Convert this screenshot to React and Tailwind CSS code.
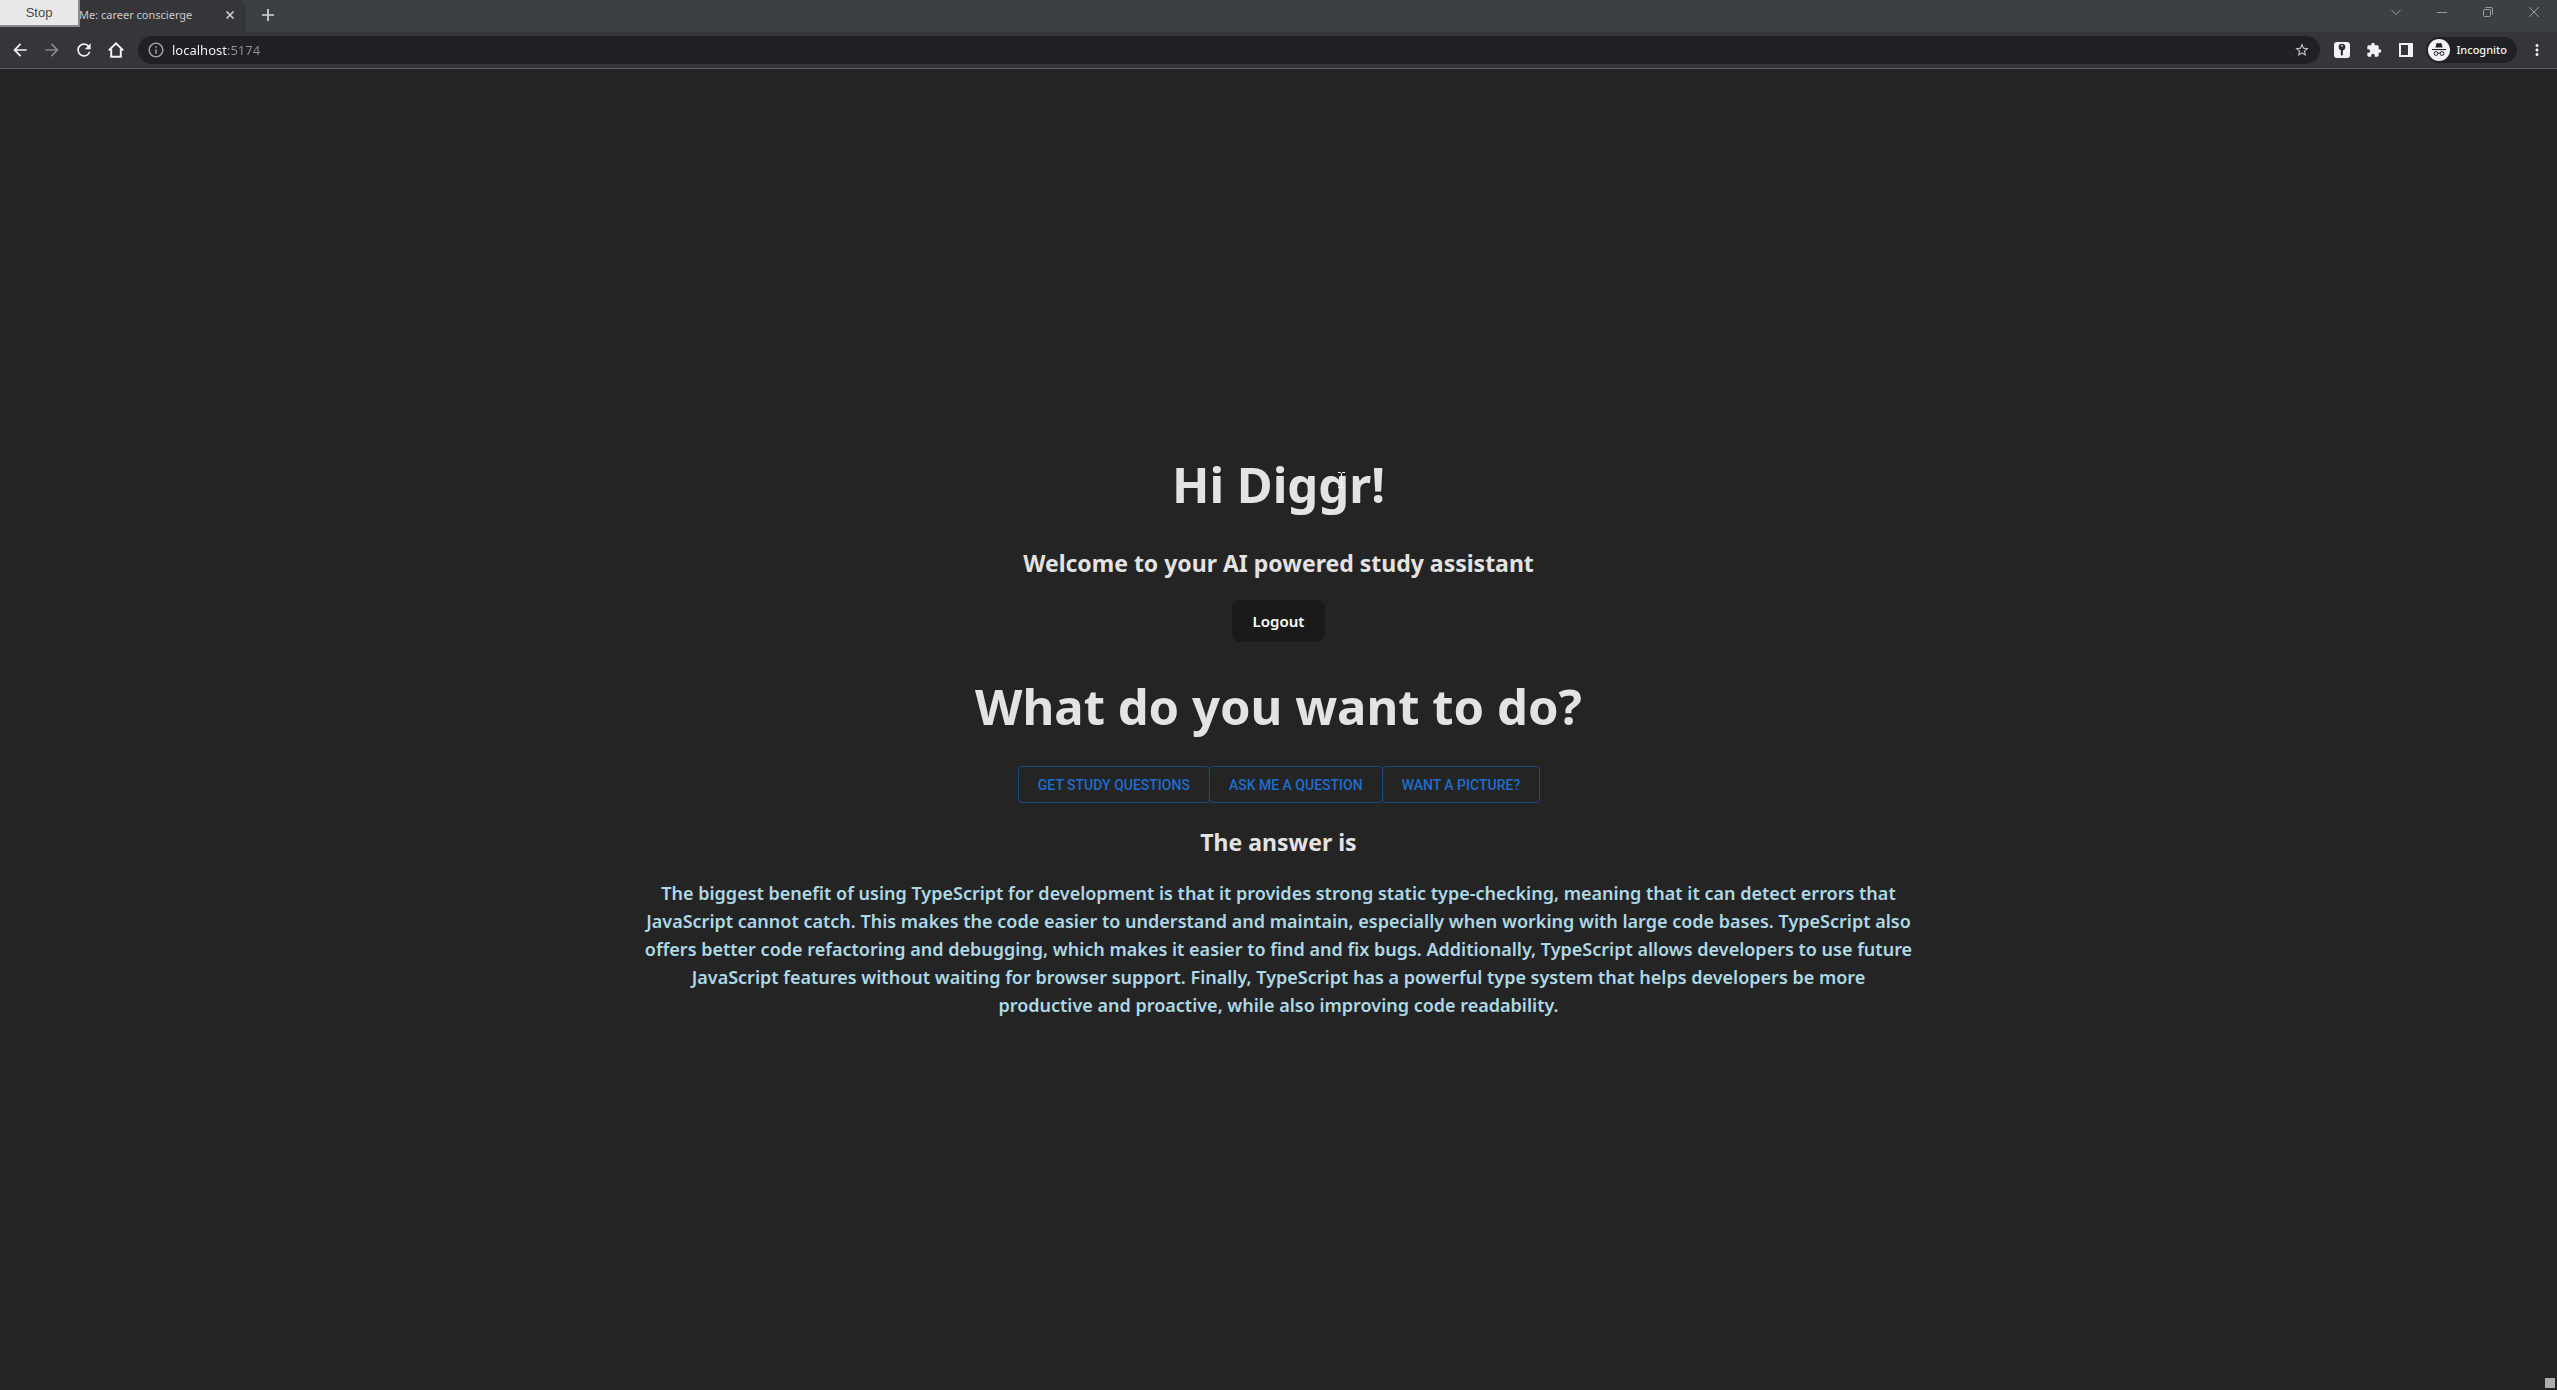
import React from "react";
import {
  MdArrowBack,
  MdArrowForward,
  MdRefresh,
  MdInfoOutline,
  MdStarBorder,
  MdExtension,
  MdMoreVert,
} from "react-icons/md";

function HomeIcon() {
  return (
    <svg viewBox="0 0 16 16" className="size-4" fill="none" stroke="currentColor" strokeWidth="2">
      <path d="M0.8 8.4 8 1.4l7.2 7" />
      <path d="M3.2 7v7.8h9.6V7" />
    </svg>
  );
}

function KeyIcon() {
  return (
    <svg viewBox="0 0 16 16" className="size-4">
      <rect width="16" height="16" rx="3" fill="#f1f3f4" />
      <circle cx="8" cy="5" r="3.3" fill="#2b2c2f" />
      <circle cx="8" cy="3.8" r="0.9" fill="#f1f3f4" />
      <path d="M6.8 7.5h2.4v1.4l-0.7 0.7 0.7 0.8-0.7 0.8 0.7 0.8L8 14l-1.2-1.2z" fill="#2b2c2f" />
    </svg>
  );
}

function PanelIcon() {
  return (
    <svg viewBox="0 0 14 14" className="size-3.5" fill="#f1f3f4">
      <path fillRule="evenodd" d="M0 0h14v14H0zM2 2v10h7V2z" />
    </svg>
  );
}

function IncognitoIcon() {
  return (
    <svg viewBox="0 0 22 22" className="size-[22px]">
      <circle cx="11" cy="11" r="11" fill="#f1f3f4" />
      <path d="M7.4 8.6 8.5 4.5c0.2-0.6 0.7-0.7 1.2-0.5 0.8 0.4 1.8 0.4 2.6 0 0.5-0.2 1 0 1.2 0.5L14.6 8.6z" fill="#202124" />
      <path d="M4 10h14v1.1H4z" fill="#202124" />
      <g fill="none" stroke="#202124" strokeWidth="1">
        <circle cx="8" cy="14.5" r="1.9" />
        <circle cx="14" cy="14.5" r="1.9" />
        <path d="M9.9 14.4q1.1-0.8 2.2 0" />
      </g>
    </svg>
  );
}

function WindowButton({ label, children }) {
  return (
    <button aria-label={label} className="flex h-6 w-[46px] items-center justify-center text-[#9b9ea1]">
      <svg viewBox="0 0 10 10" className="size-2.5 overflow-visible" fill="none" stroke="currentColor" strokeWidth="1">
        {children}
      </svg>
    </button>
  );
}

function IconButton({ label, dim, children }) {
  return (
    <button
      aria-label={label}
      className={dim ? "flex size-8 shrink-0 items-center justify-center text-[#85878a]" : "flex size-8 shrink-0 items-center justify-center"}
    >
      {children}
    </button>
  );
}

function TabStrip() {
  return (
    <div className="flex h-8 items-start bg-[#3c4043]">
      <div className="flex h-8 w-[246px] items-center justify-between rounded-tr-lg bg-[#35363a] pr-2 pb-0.5 pl-[79px]">
        <span className="text-[11px] whitespace-nowrap text-[#c9cbce]">Me: career conscierge</span>
        <button aria-label="Close tab" className="flex size-4 items-center justify-center text-[#d5d7da]">
          <svg viewBox="0 0 8 8" className="size-2" stroke="currentColor" strokeWidth="1.5">
            <path d="M0.5 0.5l7 7M7.5 0.5l-7 7" />
          </svg>
        </button>
      </div>
      <button aria-label="New tab" className="ml-2 flex h-[30px] w-7 items-center justify-center text-[#d5d7da]">
        <svg viewBox="0 0 12 12" className="size-3" stroke="currentColor" strokeWidth="1.7">
          <path d="M6 0v12M0 6h12" />
        </svg>
      </button>
      <div className="ml-auto flex">
        <WindowButton label="Search tabs">
          <path d="M0.5 3 5 7.5 9.5 3" />
        </WindowButton>
        <WindowButton label="Minimize">
          <path d="M0 5.5h10" />
        </WindowButton>
        <WindowButton label="Restore">
          <rect x="0.5" y="2.5" width="7" height="7" rx="1" />
          <path d="M2.5 0.5h5.5a1.5 1.5 0 0 1 1.5 1.5v5.5" />
        </WindowButton>
        <WindowButton label="Close">
          <path d="M0.2 0.2l9.6 9.6M9.8 0.2 0.2 9.8" />
        </WindowButton>
      </div>
    </div>
  );
}

function Toolbar() {
  return (
    <div className="flex h-[37px] items-center border-b border-[#5d5e61] bg-[#35363a] pr-2 pl-1 text-[#f1f3f4]">
      <IconButton label="Back">
        <MdArrowBack className="size-5" />
      </IconButton>
      <IconButton label="Forward" dim>
        <MdArrowForward className="size-5" />
      </IconButton>
      <IconButton label="Reload">
        <MdRefresh className="size-5" />
      </IconButton>
      <IconButton label="Home">
        <HomeIcon />
      </IconButton>
      <div className="ml-1.5 flex h-7 flex-1 items-center rounded-full bg-[#202124] pr-2.5 pl-2">
        <button aria-label="Site information" className="flex size-5 items-center justify-center text-[#9aa0a6]">
          <MdInfoOutline className="size-[18px]" />
        </button>
        <input
          aria-label="Address"
          defaultValue="localhost:5174"
          className="ml-1.5 h-7 flex-1 bg-linear-to-r from-white from-[55px] to-[#8d9196] to-[55px] bg-clip-text text-[13px] text-transparent outline-none"
        />
        <button aria-label="Bookmark this tab" className="flex size-4 items-center justify-center text-[#c6c9cc]">
          <MdStarBorder className="size-4" />
        </button>
      </div>
      <div className="ml-1.5 flex">
        <IconButton label="Password manager">
          <KeyIcon />
        </IconButton>
        <IconButton label="Extensions">
          <MdExtension className="size-4" />
        </IconButton>
        <IconButton label="Side panel">
          <PanelIcon />
        </IconButton>
      </div>
      <button className="ml-1 flex h-[26px] items-center gap-1.5 rounded-full bg-[#202124] pr-2.5 pl-0.5 text-[11px] font-medium text-[#f1f3f4]">
        <IncognitoIcon />
        Incognito
      </button>
      <button aria-label="Menu" className="ml-2 flex h-8 w-6 items-center justify-center">
        <MdMoreVert className="size-[18px]" />
      </button>
    </div>
  );
}

const actions = ["Get study questions", "Ask me a question", "Want a picture?"];

export default function App() {
  return (
    <div className="relative flex min-h-screen flex-col bg-[#242424] font-['Noto_Sans',sans-serif] text-[#e3e3e3]">
      <header>
        <TabStrip />
        <Toolbar />
      </header>
      <button className="absolute top-0 left-0 h-[27px] w-20 border-r-2 border-b-2 border-[#8a8a8a] bg-[#e8e8e8] font-['Liberation_Sans',sans-serif] text-[13px] text-[#4a4a4a]">
        Stop
      </button>
      <main className="mx-auto flex w-full max-w-[1270px] flex-1 flex-col items-center justify-center text-center">
        <h1 className="relative mt-9 mb-8 text-[49px] leading-14 font-bold">
          Hi Diggr!
          <svg viewBox="0 0 7 16" className="absolute top-4 right-10 h-4 w-[7px]" fill="none" stroke="#ffffff">
            <path d="M0 0.5h2.5l1 1 1-1H7M3.5 1.5v13M0 15.5h2.5l1-1 1 1H7" />
          </svg>
        </h1>
        <h2 className="text-[23px] leading-[38px] font-bold">Welcome to your AI powered study assistant</h2>
        <button className="mt-[18px] h-[42px] rounded-lg border border-transparent bg-[#1a1a1a] px-5 text-[15px] font-semibold text-white">
          Logout
        </button>
        <h1 className="mt-9 mb-8 text-[49px] leading-14 font-bold">What do you want to do?</h1>
        <div className="flex font-['Roboto',sans-serif] text-sm font-medium text-[#1f6dce]">
          {actions.map((label) => (
            <button key={label} className="-mr-px h-[37px] rounded border border-[#1d4c7c] px-[19px] uppercase">
              {label}
            </button>
          ))}
        </div>
        <h2 className="mt-5 mb-[18px] text-[23px] leading-[38px] font-bold">The answer is</h2>
        <p className="mb-5 text-lg leading-7 font-semibold text-[#add8e6]">
          The biggest benefit of using TypeScript for development is that it provides strong static type-checking,
          meaning that it can detect errors that JavaScript cannot catch. This makes the code easier to understand and
          maintain, especially when working with large code bases. TypeScript also offers better code refactoring and
          debugging, which makes it easier to find and fix bugs. Additionally, TypeScript allows developers to use
          future JavaScript features without waiting for browser support. Finally, TypeScript has a powerful type
          system that helps developers be more productive and proactive, while also improving code readability.
        </p>
      </main>
      <div className="absolute right-0.5 bottom-0.5 size-2.5 bg-[#adadad]" />
    </div>
  );
}
